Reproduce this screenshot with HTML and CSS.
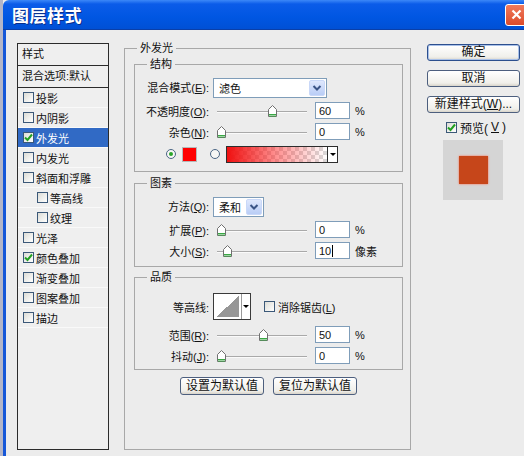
FILE: index.html
```html
<!DOCTYPE html>
<html>
<head>
	<meta charset="utf-8">
	<title>图层样式</title>
	<link rel="stylesheet" href="styles.css">
</head>
<body>
<div class="window">
	<div class="titlebar">
		<span class="title">图层样式</span>
		<span class="close">
			<svg width="11" height="11" viewBox="0 0 11 11"><path d="M1.5 1.5 L9.5 9.5 M9.5 1.5 L1.5 9.5" stroke="#fff" stroke-width="2.2"/></svg>
		</span>
	</div>

	<div class="frame">
		<div class="style-list">
			<div class="list-head">样式</div>
			<div class="list-head">混合选项:默认</div>
			<div class="item"><span class="check"></span>投影</div>
			<div class="item"><span class="check"></span>内阴影</div>
			<div class="item selected"><span class="check on"><svg width="9" height="9" viewBox="0 0 9 9"><polyline points="1,4.5 3.5,7 8,1.5" fill="none" stroke="#22a022" stroke-width="2"/></svg></span>外发光</div>
			<div class="item"><span class="check"></span>内发光</div>
			<div class="item"><span class="check"></span>斜面和浮雕</div>
			<div class="item sub"><span class="check"></span>等高线</div>
			<div class="item sub"><span class="check"></span>纹理</div>
			<div class="item"><span class="check"></span>光泽</div>
			<div class="item"><span class="check on"><svg width="9" height="9" viewBox="0 0 9 9"><polyline points="1,4.5 3.5,7 8,1.5" fill="none" stroke="#22a022" stroke-width="2"/></svg></span>颜色叠加</div>
			<div class="item"><span class="check"></span>渐变叠加</div>
			<div class="item"><span class="check"></span>图案叠加</div>
			<div class="item"><span class="check"></span>描边</div>
		</div>

		<fieldset class="outer">
			<legend>外发光</legend>

			<fieldset class="group structure">
				<legend>结构</legend>
				<div class="row tall">
					<label>混合模式(<u>E</u>):</label>
					<div class="select wide"><span>滤色</span><i class="drop"><svg width="10" height="8" viewBox="0 0 10 8"><polyline points="1.5,2 5,5.5 8.5,2" fill="none" stroke="#3b5586" stroke-width="2"/></svg></i></div>
				</div>
				<div class="row">
					<label>不透明度(<u>O</u>):</label>
					<div class="slider"><svg class="thumb" style="left:51px" width="9" height="12" viewBox="0 0 9 12"><path d="M0.5 4.5 L4.5 0.5 L8.5 4.5 L8.5 11.5 L0.5 11.5 Z" fill="#fff" stroke="#707070"/><path d="M1 9.5 H8 M1 11 H8" stroke="#3aa845"/></svg></div>
					<div class="num">60</div><span class="unit">%</span>
				</div>
				<div class="row">
					<label>杂色(<u>N</u>):</label>
					<div class="slider"><svg class="thumb" style="left:0px" width="9" height="12" viewBox="0 0 9 12"><path d="M0.5 4.5 L4.5 0.5 L8.5 4.5 L8.5 11.5 L0.5 11.5 Z" fill="#fff" stroke="#707070"/><path d="M1 9.5 H8 M1 11 H8" stroke="#3aa845"/></svg></div>
					<div class="num">0</div><span class="unit">%</span>
				</div>
				<div class="row colors">
					<span class="radio on"></span>
					<span class="swatch"></span>
					<span class="radio"></span>
					<div class="gradient"><span class="ramp"></span><i class="arrow"></i></div>
				</div>
			</fieldset>

			<fieldset class="group elements">
				<legend>图素</legend>
				<div class="row tall">
					<label>方法(<u>Q</u>):</label>
					<div class="select narrow"><span>柔和</span><i class="drop"><svg width="10" height="8" viewBox="0 0 10 8"><polyline points="1.5,2 5,5.5 8.5,2" fill="none" stroke="#3b5586" stroke-width="2"/></svg></i></div>
				</div>
				<div class="row">
					<label>扩展(<u>P</u>):</label>
					<div class="slider"><svg class="thumb" style="left:0px" width="9" height="12" viewBox="0 0 9 12"><path d="M0.5 4.5 L4.5 0.5 L8.5 4.5 L8.5 11.5 L0.5 11.5 Z" fill="#fff" stroke="#707070"/><path d="M1 9.5 H8 M1 11 H8" stroke="#3aa845"/></svg></div>
					<div class="num">0</div><span class="unit">%</span>
				</div>
				<div class="row">
					<label>大小(<u>S</u>):</label>
					<div class="slider"><svg class="thumb" style="left:6px" width="9" height="12" viewBox="0 0 9 12"><path d="M0.5 4.5 L4.5 0.5 L8.5 4.5 L8.5 11.5 L0.5 11.5 Z" fill="#fff" stroke="#707070"/><path d="M1 9.5 H8 M1 11 H8" stroke="#3aa845"/></svg></div>
					<div class="num">10<i class="caret"></i></div><span class="unit">像素</span>
				</div>
			</fieldset>

			<fieldset class="group quality">
				<legend>品质</legend>
				<div class="row contour-row">
					<label>等高线:</label>
					<div class="contour"><span class="curve"></span><i class="arrow"></i></div>
					<span class="check aa"></span><span class="aa-text">消除锯齿(<u>L</u>)</span>
				</div>
				<div class="row">
					<label>范围(<u>R</u>):</label>
					<div class="slider"><svg class="thumb" style="left:42px" width="9" height="12" viewBox="0 0 9 12"><path d="M0.5 4.5 L4.5 0.5 L8.5 4.5 L8.5 11.5 L0.5 11.5 Z" fill="#fff" stroke="#707070"/><path d="M1 9.5 H8 M1 11 H8" stroke="#3aa845"/></svg></div>
					<div class="num">50</div><span class="unit">%</span>
				</div>
				<div class="row">
					<label>抖动(<u>J</u>):</label>
					<div class="slider"><svg class="thumb" style="left:0px" width="9" height="12" viewBox="0 0 9 12"><path d="M0.5 4.5 L4.5 0.5 L8.5 4.5 L8.5 11.5 L0.5 11.5 Z" fill="#fff" stroke="#707070"/><path d="M1 9.5 H8 M1 11 H8" stroke="#3aa845"/></svg></div>
					<div class="num">0</div><span class="unit">%</span>
				</div>
			</fieldset>

			<div class="defaults">
				<button>设置为默认值</button>
				<button>复位为默认值</button>
			</div>
		</fieldset>

		<div class="side">
			<button class="primary">确定</button>
			<button>取消</button>
			<button>新建样式(<u>W</u>)...</button>
			<div class="preview-toggle"><span class="check on"><svg width="9" height="9" viewBox="0 0 9 9"><polyline points="1,4.5 3.5,7 8,1.5" fill="none" stroke="#22a022" stroke-width="2"/></svg></span>预览(<u>V</u>)</div>
			<div class="preview"><span class="sample"></span></div>
		</div>
	</div>
</div>
</body>
</html>
```

FILE: styles.css
```css
* {
	box-sizing: border-box;
}
html, body {
	margin: 0;
}
body {
	font: 11px "Liberation Sans", "Noto Sans CJK SC", sans-serif;
	color: #111;
	background: #ececec;
}
.window {
	width: 524px;
	height: 456px;
	overflow: hidden;
	display: flex;
	flex-direction: column;
	border-left: 3px solid #b4b6c8;
	background: #ececec;
}
.titlebar {
	height: 30px;
	flex: none;
	display: flex;
	align-items: center;
	padding-left: 9px;
	background: linear-gradient(#3c88f8, #0b5ce9 4px, #0056e2 60%, #0050d5);
	border-bottom: 1px solid #0a3fa8;
	border-top-left-radius: 6px;
}
.title {
	font: bold 17px "Noto Sans CJK SC", sans-serif;
	color: #fff;
	text-shadow: 1px 1px 0 #0a2f8a;
	letter-spacing: 0.5px;
}
.close {
	margin-left: auto;
	margin-right: -3px;
	width: 22px;
	height: 22px;
	border: 1px solid #fff;
	border-radius: 3px;
	background: linear-gradient(#f07a5c, #dc4b2a);
	display: flex;
	align-items: center;
	justify-content: center;
}
.frame {
	flex: 1;
	display: flex;
	align-items: stretch;
	border-left: 3px solid #1657d8;
	padding: 10px 0 6px 11px;
}

/* left list */
.style-list {
	width: 92px;
	flex: none;
	margin-top: 3px;
	border: 1px solid #2b2b2b;
	background: #efefef;
}
.list-head {
	height: 22px;
	line-height: 21px;
	padding-left: 4px;
	border-bottom: 1px solid #2b2b2b;
}
.item {
	height: 20px;
	display: flex;
	align-items: center;
	padding-left: 5px;
	gap: 2px;
	border-bottom: 1px solid #f9f9f9;
}
.item.sub {
	padding-left: 19px;
}
.item.selected {
	background: #316ac5;
	color: #fff;
}
.check {
	width: 11px;
	height: 11px;
	flex: none;
	border: 1px solid #3b5878;
	background: linear-gradient(135deg, #dcdcd6, #fff);
	display: inline-flex;
	align-items: center;
	justify-content: center;
}

/* fieldsets */
fieldset {
	margin: 0;
	min-width: 0;
	border: 1px solid #a8a8a8;
}
legend {
	padding: 0 3px;
	line-height: 16px;
}
.outer {
	width: 287px;
	margin-left: 15px;
	padding: 0 7px 0 9px;
}
.outer > legend {
	margin-left: 3px;
}
.group {
	padding: 6px 0 5px 0;
}
.group > legend {
	margin-left: 12px;
}
.elements {
	margin-top: 3px;
	padding-bottom: 5px;
}
.quality {
	margin-top: 2px;
	padding-bottom: 3px;
}
.row {
	height: 21px;
	display: flex;
	align-items: center;
}
.row.tall {
	height: 22px;
	align-items: flex-start;
}
.row label {
	width: 74px;
	text-align: right;
	margin-right: 4px;
	white-space: nowrap;
}
.row.tall label {
	line-height: 20px;
}
.select {
	height: 20px;
	border: 1px solid #7f9db9;
	background: #fff;
	display: flex;
	align-items: center;
	padding: 0 1px 0 5px;
}
.select span {
	flex: 1;
}
.select.wide {
	width: 114px;
}
.select.narrow {
	width: 51px;
}
.drop {
	width: 16px;
	height: 16px;
	border-radius: 2px;
	background: linear-gradient(#dfe8fd, #b9cdf6);
	border: 1px solid #c9d8f8;
	display: flex;
	align-items: center;
	justify-content: center;
}
.slider {
	position: relative;
	width: 90px;
	height: 12px;
	margin-left: 4px;
}
.slider::before {
	content: "";
	position: absolute;
	left: 0;
	right: 0;
	top: 6px;
	border-top: 1px solid #a9a9a9;
	border-bottom: 1px solid #fafafa;
}
.thumb {
	position: absolute;
	top: 0;
}
.num {
	width: 35px;
	height: 17px;
	margin-left: 8px;
	border: 1px solid #7f9db9;
	background: #fff;
	padding-left: 3px;
	display: flex;
	align-items: center;
}
.caret {
	width: 1px;
	height: 12px;
	background: #000;
	margin-left: 1px;
}
.unit {
	margin-left: 5px;
}
.row.colors {
	height: 24px;
	padding-left: 31px;
}
.radio {
	width: 10px;
	height: 10px;
	border-radius: 50%;
	border: 1px solid #4a6584;
	background: #f6f6f4;
	display: flex;
	align-items: center;
	justify-content: center;
}
.radio.on::after {
	content: "";
	width: 4px;
	height: 4px;
	border-radius: 50%;
	background: #2aa52a;
}
.swatch {
	width: 15px;
	height: 15px;
	margin: 0 13px 0 6px;
	background: #ff0000;
	border: 1px solid #b7b7b7;
}
.gradient {
	width: 112px;
	height: 17px;
	margin-left: 6px;
	border: 1px solid #2d2d2d;
	display: flex;
	background: #fff;
}
.ramp {
	flex: 1;
	background:
		linear-gradient(to right, #f01010, rgba(255, 40, 40, 0.5) 50%, rgba(255, 40, 40, 0)),
		conic-gradient(#d9d9d9 25%, #fff 0 50%, #d9d9d9 0 75%, #fff 0) 0 0 / 8px 8px;
}
.arrow {
	width: 10px;
	border-left: 1px solid #2d2d2d;
	background: #fff;
	display: flex;
	align-items: center;
	justify-content: center;
}
.arrow::after {
	content: "";
	border-left: 3px solid transparent;
	border-right: 3px solid transparent;
	border-top: 3px solid #000;
}
.contour-row {
	height: 33px;
	align-items: flex-start;
	padding-top: 2px;
}
.contour-row label {
	margin-top: 6px;
}
.contour {
	width: 38px;
	height: 27px;
	border: 1px solid #3a3a3a;
	display: flex;
	background: #fff;
}
.curve {
	width: 26px;
	margin: 2px;
	background: linear-gradient(to bottom right, #fff 50%, #979797 50%);
}
.contour .arrow {
	border-left-color: #9a9a9a;
}
.check.aa {
	margin: 8px 3px 0 13px;
}
.aa-text {
	margin-top: 6px;
}
.defaults {
	display: flex;
	justify-content: center;
	gap: 9px;
	margin-top: 7px;
}

/* buttons */
button {
	font: 11px "Liberation Sans", "Noto Sans CJK SC", sans-serif;
	color: #111;
	height: 18px;
	padding: 0;
	border: 1px solid #4d5f7e;
	border-radius: 3px;
	background: linear-gradient(#ffffff, #f0efea 80%, #d8d4ca);
	line-height: 15px;
}
.defaults button {
	width: 84px;
	font-size: 12px;
}
.side {
	width: 93px;
	margin-left: 16px;
	margin-top: 4px;
	display: flex;
	flex-direction: column;
}
.side button {
	height: 17px;
	margin-bottom: 9px;
	font-size: 12px;
}
.side button.primary {
	border-color: #2c4f8e;
	box-shadow: inset 0 0 0 1px #a8c0e8;
}
.preview-toggle {
	display: flex;
	align-items: center;
	gap: 3px;
	padding-left: 19px;
	height: 12px;
	margin-top: -1px;
	font-size: 12px;
}
.preview {
	width: 60px;
	height: 60px;
	margin: 7px 0 0 16px;
	background: #d5d5d5;
	display: flex;
	align-items: center;
	justify-content: center;
}
.sample {
	width: 29px;
	height: 28px;
	background: #c6461a;
	box-shadow: 0 0 2px #ff6a50;
}
```
